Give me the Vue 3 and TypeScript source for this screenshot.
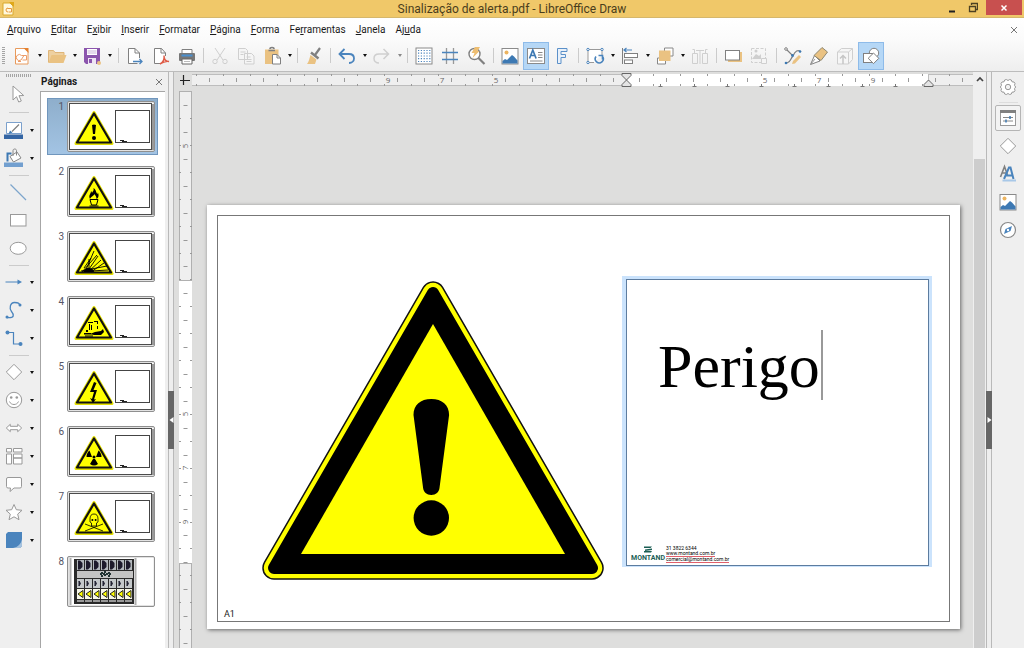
<script setup lang="ts">
interface Tool {
  kind: 'button' | 'sep'
  icon?: string
  label?: string
  menu?: boolean
  active?: boolean
  faded?: boolean
  wide?: boolean
}

const menus: [string, string, string][] = [
  ['', 'A', 'rquivo'],
  ['', 'E', 'ditar'],
  ['E', 'x', 'ibir'],
  ['', 'I', 'nserir'],
  ['', 'F', 'ormatar'],
  ['', 'P', 'ágina'],
  ['', 'F', 'orma'],
  ['Fe', 'r', 'ramentas'],
  ['', 'J', 'anela'],
  ['Aj', 'u', 'da'],
]

const b = (icon: string, label: string, extra: Partial<Tool> = {}): Tool => ({ kind: 'button', icon, label, ...extra })
const sep = (wide = false): Tool => ({ kind: 'sep', wide })

const toolbar: Tool[] = [
  b('new', 'Novo', { menu: true }),
  b('open', 'Abrir', { menu: true }),
  b('save', 'Salvar', { menu: true }),
  sep(true),
  b('export', 'Exportar'),
  b('pdf', 'Exportar como PDF'),
  b('print', 'Imprimir'),
  sep(),
  b('cut', 'Cortar'),
  b('copy', 'Copiar'),
  b('paste', 'Colar', { menu: true }),
  sep(),
  b('brush', 'Clonar formatação'),
  sep(),
  b('undo', 'Desfazer', { menu: true }),
  b('redo', 'Refazer', { menu: true, faded: true }),
  sep(),
  b('grid', 'Exibir grade'),
  b('guides', 'Linhas de ajuda'),
  b('zoom', 'Zoom'),
  sep(true),
  b('image', 'Inserir imagem'),
  b('textbox', 'Inserir caixa de texto', { active: true }),
  b('fontwork', 'Inserir Fontwork'),
  sep(),
  b('transform', 'Transformações', { menu: true }),
  b('align', 'Alinhar', { menu: true }),
  b('arrange', 'Dispor', { menu: true }),
  b('distribute', 'Distribuir'),
  sep(),
  b('shadow', 'Sombra'),
  b('crop', 'Cortar imagem'),
  sep(true),
  b('points', 'Editar pontos'),
  b('glue', 'Pontos de colagem'),
  b('extrude', 'Extrusão'),
  b('shapes', 'Mostrar funções de desenho', { active: true }),
]

const drawTools: Tool[] = [
  b('select', 'Selecionar'),
  sep(true),
  b('linecolor', 'Cor da linha', { menu: true }),
  b('fillcolor', 'Cor de preenchimento', { menu: true }),
  sep(),
  b('line', 'Linha'),
  b('rect', 'Retângulo'),
  b('ellipse', 'Elipse'),
  sep(),
  b('arrowline', 'Linhas e setas', { menu: true }),
  b('curve', 'Curvas', { menu: true }),
  b('connector', 'Conectores', { menu: true }),
  sep(),
  b('diamond', 'Formas simples', { menu: true }),
  b('smile', 'Símbolos', { menu: true }),
  b('dblarrow', 'Setas largas', { menu: true }),
  b('flow', 'Fluxograma', { menu: true }),
  b('callout', 'Balões', { menu: true }),
  b('star', 'Estrelas', { menu: true }),
  b('cube', 'Objetos 3D', { menu: true }),
]

const sideTools = [
  { icon: 'props', label: 'Propriedades', active: true },
  { icon: 'diamond', label: 'Formas' },
  { icon: 'styles', label: 'Estilos' },
  { icon: 'image', label: 'Galeria' },
  { icon: 'compass', label: 'Navegador' },
]

const G = '#808080'
const L = '#cfcfcf'
const B = '#4a84bd'
const O = '#eac282'

const icons: Record<string, string> = {
  new: `<path d="M3.500 2.500h9.500l3 3v12.500h-12.500z" fill="#fff" stroke="#e89a5c"/><path d="M11.500 2h5v5z" fill="#e5812f"/><path d="M9.500 9.500a3 3 0 1 0-.5 4.500l3-4.500M9.500 9.500h5v4.500h-4M6 15.500h3" fill="none" stroke="#ec9c68"/>`,
  open: `<path d="M1.500 16.500v-12h5l1.500 2h9v3" fill="#eed0a0" stroke="#dfb578"/><path d="M1.500 17l3-8h15l-3 8z" fill="${O}"/>`,
  save: `<path d="M2 2h16v16h-14l-2-2z" fill="#8b55ad"/><path d="M5 3h10v6h-10z" fill="#fff"/><path d="M5.500 5h9M5.500 7h9" stroke="#c9b4d8"/><path d="M6 12h8v6h-8z" fill="#eee5f3"/><path d="M7 13h3v4h-3z" fill="#8b55ad"/><circle cx="17" cy="17" r="2" fill="${O}"/>`,
  export: `<path d="M12.500 17.500h-9v-15h6.500l4.500 4.500v5" fill="#fff" stroke="${G}"/><path d="M10 2.500v4.500h4.500" fill="none" stroke="${G}"/><path d="M8 15.500h9M14.500 13l2.500 2.500-2.500 2.500" fill="none" stroke="${B}" stroke-width="1.300"/>`,
  pdf: `<path d="M9 17.500h-5.500v-15h7l4 4.500v3" fill="#fff" stroke="${G}"/><path d="M10 2.500v4.500h4.500" fill="none" stroke="${G}"/><path d="M9 18c3-1.500 4.500-5 4-8.500 0 4 2 6 5 6-3-.5-6 .5-9 2.500z" fill="none" stroke="#df5a45" stroke-width="1.400"/>`,
  print: `<path d="M5 7v-3.500h10v3.500" fill="#fff" stroke="${G}"/><rect x="2" y="7" width="16" height="8" rx="1" fill="#777"/><path d="M4.500 9.500h11" stroke="#4a90d0" stroke-width="2"/><path d="M5 13h10v5h-10z" fill="#fff" stroke="#666"/><path d="M7 15.500h6" stroke="#bbb"/>`,
  cut: `<path d="M5 2l8 12M15 2l-8 12" stroke="${L}" fill="none"/><circle cx="5" cy="15.500" r="2.200" fill="none" stroke="${L}"/><circle cx="15" cy="15.500" r="2.200" fill="none" stroke="${L}"/>`,
  copy: `<path d="M2.500 2.500h7l2 2v9h-9zM8.500 7.500h7l2.500 2.500v8h-9.500z" fill="#f5f5f5" stroke="${L}"/><path d="M4.500 6h5M4.500 8.500h3M10.500 11h4M10.500 13.500h5M10.500 15.500h5" stroke="${L}"/>`,
  paste: `<path d="M3 3.500h13.500v14.500h-13.500z" fill="${O}"/><path d="M6.500 4.500h6.500M8 3c0-2 4-2 4 0" fill="none" stroke="${G}" stroke-width="1.600"/><path d="M10.500 8.500h4.500l3.500 3.500v6h-8z" fill="#fff" stroke="${G}"/><path d="M15 8.500v3.500h3.500" fill="none" stroke="${G}"/>`,
  brush: `<path d="M16 2l-5 7" stroke="${G}" stroke-width="2.200"/><path d="M7 6.500l7.500 6" stroke="${G}" stroke-width="2.400"/><path d="M6.500 9l6 4.500-1.500 4.500h-8c2-2.500 2.500-6 3.500-9z" fill="${O}"/>`,
  undo: `<path d="M7.500 3l-5 5 5 5M3 8h9c3.500 0 5 2 5 4.500s-2 4.500-5 4.500" fill="none" stroke="${B}" stroke-width="1.800"/>`,
  redo: `<path d="M11.500 3l5 5-5 5M16 8h-9c-3.500 0-5 2-5 4.500s2 4.500 5 4.500" fill="none" stroke="${L}" stroke-width="1.500"/>`,
  grid: `<rect x="2" y="2" width="16" height="16" fill="#fff" stroke="#8a8a8a"/><path d="M4 4.500h13M4 7.200h13M4 10h13M4 12.700h13M4 15.500h13" stroke="${B}" stroke-width="1.200" stroke-dasharray="1.200 1.600"/>`,
  guides: `<path d="M6.500 2v16M13.500 2v16" stroke="#999" stroke-width="1.300"/><path d="M2 6.500h16M2 13.500h16" stroke="${B}" stroke-width="1.300"/>`,
  zoom: `<circle cx="8.500" cy="8" r="5.500" fill="#fff" stroke="${G}" stroke-width="1.400"/><path d="M12.500 12l6 6" stroke="${G}" stroke-width="2.200"/><path d="M9 1h5l-2.500 4h2l-7 7 2-5h-3z" fill="#eebe72"/>`,
  image: `<rect x="2" y="2.500" width="16" height="15.500" fill="#fff" stroke="#8a8a8a"/><circle cx="6.500" cy="6.500" r="2" fill="#ecb460"/><path d="M2.500 15l2.500-2 2 1 5-5 2 1.500 3.500 4v3h-15z" fill="#3d79b3"/>`,
  textbox: `<rect x="1.500" y="2.500" width="17" height="15" fill="#fff" stroke="#8a8a8a"/><path d="M3.500 12.500l3.300-8.500 3.300 8.500M5 9.500h3.600" fill="none" stroke="#3d79b3" stroke-width="1.700"/><path d="M12 6.500h4.500M12 9h4.500M12 11.500h4.500M4 15h12.500" stroke="#888"/>`,
  fontwork: `<path d="M5.500 2.500h9.500v3h-6v3h4.500v3h-4.500v6h-3.500v-12.500z" fill="#e9f1fa" stroke="#5b90c9"/>`,
  transform: `<path d="M17 9v-5.500h-14v13h6" fill="#fff" stroke="#999"/><path d="M17.500 10.500a4 4 0 1 1-6.500 0M13.500 9.500h4v4" fill="none" stroke="${B}" stroke-width="1.600"/><g fill="#fff" stroke="${B}"><circle cx="3" cy="3.500" r="1.200"/><circle cx="17" cy="3.500" r="1.200"/><circle cx="3" cy="16.500" r="1.200"/></g>`,
  align: `<path d="M2.500 2v16" stroke="${G}"/><path d="M4 4h8M6.500 2l-2.500 2 2.500 2" fill="none" stroke="${B}" stroke-width="1.200"/><rect x="4.500" y="7.500" width="13" height="4" fill="#fff" stroke="${G}"/><rect x="4.500" y="14" width="8" height="3.500" fill="#fff" stroke="${G}"/>`,
  arrange: `<path d="M9.500 5v-3h8.500v8h-3M5 12h-2.500v6h8v-3" fill="#fff" stroke="#888"/><rect x="4" y="4.500" width="11.500" height="10.500" fill="${O}"/>`,
  distribute: `<path d="M2.500 7.500h5v10h-5zM12.500 7.500h5v10h-5zM10 4v14M4.500 7v-3.500h-2M15.500 7v-3.500h2M6 4.500h8" fill="none" stroke="${L}"/>`,
  shadow: `<rect x="5" y="6" width="14" height="10" fill="${O}"/><rect x="2.500" y="4.500" width="14" height="9.500" fill="#fff" stroke="${G}"/>`,
  crop: `<rect x="2.500" y="2.500" width="14" height="14" fill="none" stroke="${L}" stroke-dasharray="3 1.500"/><path d="M3 13l4-5 3 2 2-2v5z" fill="${L}"/><circle cx="7" cy="5" r="1.500" fill="${L}"/><path d="M12.500 12.500h5v5h-5z" fill="#f5f5f5" stroke="${L}"/>`,
  points: `<path d="M3 3l7 7c2-5 5-7 8-4M10 10c-3 3-2 6-6 7" fill="none" stroke="${G}" stroke-width="1.200"/><path d="M16 9l-6 6-1 3 3-.5 6-6.500z" fill="${O}"/><g fill="#3d79b3"><circle cx="3" cy="17" r="1.300"/><circle cx="9.500" cy="9.500" r="1.400"/><circle cx="17" cy="5.500" r="1.300"/></g><circle cx="3" cy="3" r="1.300" fill="#fff" stroke="${G}"/>`,
  glue: `<path d="M1.500 18.500l4-9 5.500 5.500z" fill="#fff" stroke="${G}"/><path d="M5 9.500l8-8 5.500 4.500-6.500 8.500z" fill="${O}" stroke="#8e8872"/><path d="M2 18l4-5" stroke="#999"/>`,
  extrude: `<path d="M2.500 6h11v12h-11zM2.500 6l4-3.500h11l-4 3.500M17.500 2.500v11l-4 4.500" fill="#f6f6f6" stroke="${L}"/><path d="M8 18v-8M5 12.500l3-3 3 3" fill="none" stroke="#c6c6c6" stroke-width="1.500"/>`,
  shapes: `<circle cx="13" cy="7" r="4.700" fill="#fff" stroke="${G}"/><rect x="2.500" y="7.500" width="9" height="9" fill="#fff" stroke="${G}"/><path d="M12.500 7l5.300 5.300-5.300 5.300-5.300-5.300z" fill="#fff" stroke="${G}"/>`,
  select: `<path d="M5 2v14l3.500-3.300 2.200 5.300 2.600-1-2.300-5.300 4.700-.2z" fill="#fff" stroke="#999"/>`,
  linecolor: `<path d="M2.500 2.500h15v11h-15z" fill="#fff" stroke="#7ba0cc"/><path d="M15 4.500l-7 7" stroke="${G}" stroke-width="1.300"/><path d="M4.500 14l1.500-3.500 2.500 2z" fill="#3d79b3"/><rect x="0" y="14.500" width="19" height="4.500" fill="#3465a4"/>`,
  fillcolor: `<path d="M3.500 13.500v-8h4" fill="none" stroke="#3d79b3" stroke-width="2"/><path d="M6 8.500l7-4.500 4 6-7.500 4z" fill="#fff" stroke="#888"/><path d="M9 8v-5.500c0-2 3.500-2 3.500 0v5" fill="none" stroke="#888"/><rect x="0" y="14.500" width="19" height="4.500" fill="#729fcf"/>`,
  line: `<path d="M2.500 2.500l15.500 15.500" stroke="#7da5cc" stroke-width="1.200"/>`,
  rect: `<rect x="2.500" y="4.500" width="15.500" height="11.500" fill="#fff" stroke="#999"/>`,
  ellipse: `<ellipse cx="10.200" cy="10.300" rx="8" ry="6" fill="#fff" stroke="#999"/>`,
  arrowline: `<path d="M1.500 10h13" stroke="${B}"/><path d="M13.500 7.500l4.500 2.500-4.500 2.500z" fill="${B}"/>`,
  curve: `<path d="M3 17.500c8 1 7-3 4.500-6s-1.500-9 3-9 4.500 1 5.500 3" fill="none" stroke="${B}" stroke-width="1.300"/><circle cx="3" cy="17" r="1.500" fill="${B}"/><circle cx="16" cy="5" r="1.500" fill="${B}"/>`,
  connector: `<path d="M4 4.500h5.500v11.500h7" fill="none" stroke="${B}" stroke-width="1.200"/><circle cx="3.500" cy="4.500" r="2" fill="${B}"/><circle cx="16.500" cy="16" r="2" fill="${B}"/>`,
  diamond: `<path d="M10 2.300l7.700 7.700-7.700 7.700-7.700-7.700z" fill="#fff" stroke="#999"/>`,
  smile: `<circle cx="10" cy="10" r="7.700" fill="#fff" stroke="#999"/><path d="M5.500 11.500c1.500 4 7.500 4 9 0" fill="none" stroke="#999"/><circle cx="7.200" cy="7.500" r="1.300" fill="#999"/><circle cx="12.800" cy="7.500" r="1.300" fill="#999"/>`,
  dblarrow: `<path d="M2.300 10l4-3.700v2h7.400v-2l4 3.700-4 3.700v-2h-7.400v2z" fill="#fff" stroke="#999"/>`,
  flow: `<path d="M2.500 2.500h5v3.500h-5zM9.500 2.500h8.500v3.500h-8.500zM2.500 8h5v10h-5zM9.500 8h8.500v4h-8.500zM9.500 12h8.500v6h-8.500z" fill="#fff" stroke="#999"/>`,
  callout: `<path d="M4 3.500h12q1.500 0 1.500 1.500v7.500q0 1.500-1.500 1.500h-6l-4 3.500.5-3.500h-2.500q-1.500 0-1.500-1.500v-7.500q0-1.500 1.500-1.500z" fill="#fff" stroke="#999"/>`,
  star: `<path d="M10 2.500l2.300 5.200 5.700.6-4.300 3.800 1.300 5.600-5-2.900-5 2.900 1.300-5.600-4.300-3.800 5.700-.6z" fill="#fff" stroke="#999"/>`,
  cube: `<path d="M2 4l2-2h14v14l-2 2h-14z" fill="#4a84bd"/><path d="M9 18c5-1 8-4 9-9v7l-2 2z" fill="#a5c2de"/>`,
  gear: `<path d="M8.300 2.500l1.700 1 1.700-1 1.600.5.700 1.800 2 .2 1 1.500-.5 1.800 1.200 1.700-1.200 1.700.5 1.800-1 1.500-2 .2-.7 1.800-1.600.5-1.700-1-1.700 1-1.600-.5-.7-1.800-2-.2-1-1.500.5-1.800-1.200-1.700 1.200-1.700-.5-1.800 1-1.500 2-.2.7-1.800z" fill="#fff" stroke="#999"/><circle cx="10" cy="10" r="2.700" fill="#f2f2f2" stroke="#999"/>`,
  props: `<rect x="2.500" y="2.500" width="15" height="15" fill="#fff" stroke="#999"/><rect x="2" y="2" width="16" height="3" fill="${G}"/><path d="M5 9.500h10M5 13h10" stroke="#888"/><path d="M12 8v3M8 11.500v3" stroke="#3d79b3" stroke-width="1.500"/>`,
  styles: `<path d="M2.500 13l4-10.500 3 8.500M4 9h4" fill="none" stroke="#808080" stroke-width="1.600"/><path d="M6 15l5-11.500h1.500l3 11.500M8 11.500h6" fill="none" stroke="${B}" stroke-width="2"/><rect x="4.500" y="15.500" width="13.500" height="2" fill="#a8c8e8"/>`,
  compass: `<circle cx="10" cy="10" r="7.500" fill="#fff" stroke="#888" stroke-width="1.200"/><path d="M14 6l-1.500 5-6.500 3 1.500-5z" fill="${B}"/><circle cx="10" cy="10" r="1.200" fill="#fff"/>`,
}

const symbols: string[] = [
  `<path d="M25 24q2-1 4 0l-1 9h-2z"/><circle cx="27" cy="37" r="2"/>`,
  `<path d="M23 33c-2-4 1-5 1-8 1 1 1 2 1 2 1-2 2-2 1.500-5 3 2 2 4 4 6 .5-1 .5-2 0-2 2 3 1 6-1 7 0-3-1-3-2-5-1 2-3 2-4.500 5z"/><path d="M23 33.500h8l-1.500 5.500h-5zM22.500 40h9" fill="#ff0" stroke="#000"/>`,
  `<path d="M14 40L40 35M15 41L30 24M18 41L27 20M22 41L22 28M21 41L34 29M24 41L37 32M17 37L24 27M24 40L41 39M20 41L31 25" stroke="#000" stroke-width=".9"/><path d="M16 41q3-5 7-4t4 4z"/>`,
  `<path d="M17 37h7v1.500h-7zM18 39.500h8v1h-8zM28 36l6-1 2-2 1 3-3 3h-7l-4-1zM21 26h5v1h-5zM27 25h4v1h-4zM22 28h1v6h-1zM24 29h1v5h-1zM30 26h1v2h-1zM30 30h1v3h-1zM19 34h2v2h-2z"/>`,
  `<path d="M27 21l-4 10h4l-2 7-2-1 3 5 3-4-2 .5 3-9.500h-3.500l3-7z"/>`,
  `<circle cx="27" cy="31" r="1.500"/><path d="M25 31h-5.500q0-4 3-6.500zM29 31h5.500q0-4-3-6.500zM26 33l-3 5q4 3 8 0l-3-5z"/>`,
  `<path d="M18 33l18 7M36 33l-18 7M23 28q0-5 4-5t4 5v3l-1.500 1v3h-5v-3l-1.500-1z" fill="#ff0" stroke="#000" stroke-width=".8"/><circle cx="25.400" cy="29" r="1"/><circle cx="28.600" cy="29" r="1"/>`,
]

const seq = (start: number, n: number, step = 26.9): number[] => Array.from({ length: n }, (_, i) => Math.round(start + i * step))
const hMid = seq(17, 30)
const hEdge = seq(4, 30)
const tabs = seq(468, 8, 33.6)
const hNums: [number, number][] = [[196, 9], [250, 7], [304, 5], [573, 5], [627, 7], [681, 9]]
const vMid = seq(14, 21)
const vEdge = seq(27, 21)
const vNums: [number, number][] = [[55, 5], [323, 5], [377, 7], [431, 9]]
const cols = [0, 1, 2, 3, 4, 5, 6]
</script>

<template>
  <div class="app">
    <header class="title">
      <svg class="appicon" viewBox="0 0 12 14"><path d="M1 1h7l3 3v9h-10z" fill="#fff8dc" stroke="#d9a92c" /><path d="M7 0h5v5z" fill="#e0a81a" /><path d="M6 6a2 2 0 1 0 0 4M5.500 6.500h4v3.500h-3" fill="none" stroke="#e5973c" /></svg>
      <h1>Sinalização de alerta.pdf - LibreOffice Draw</h1>
      <div class="winbtns">
        <button aria-label="Minimizar"><svg width="11" height="12"><path d="M3 9.500h6" stroke="#222" stroke-width="2" /></svg></button>
        <button aria-label="Restaurar"><svg width="13" height="12"><path d="M6.500 3v-1.500h6v6h-1.500M4.500 4.500h6v5h-6z" fill="none" stroke="#4d4122" stroke-width="1.300" /></svg></button>
        <button class="close" aria-label="Fechar"><svg width="8" height="8"><path d="M1.500 1.500l5 5M6.500 1.500l-5 5" stroke="#fff" stroke-width="1.500" /></svg></button>
      </div>
    </header>

    <div class="chrome">
      <nav class="menubar">
        <button v-for="m in menus" :key="m.join('')">{{ m[0] }}<u>{{ m[1] }}</u>{{ m[2] }}</button>
        <button class="docclose" aria-label="Fechar documento"><svg width="8" height="8"><path d="M1 1l6 6M7 1l-6 6" stroke="#777" /></svg></button>
      </nav>
      <div class="toolbar" role="toolbar" aria-label="Padrão">
        <span class="grip"></span>
        <template v-for="(t, i) in toolbar" :key="i">
          <span v-if="t.kind === 'sep'" class="sep" :class="{ wide: t.wide }"></span>
          <template v-else>
            <button class="tool" :class="{ active: t.active }" :aria-label="t.label"><svg viewBox="0 0 20 20" v-html="icons[t.icon!]"></svg></button>
            <button v-if="t.menu" class="drop" :class="{ faded: t.faded }" :aria-label="t.label + ': opções'"></button>
          </template>
        </template>
      </div>
    </div>

    <div class="body">
      <div class="drawbar" role="toolbar" aria-label="Desenho">
        <span class="hgrip"></span>
        <template v-for="(t, i) in drawTools" :key="i">
          <span v-if="t.kind === 'sep'" class="hsep" :class="{ wide: t.wide }"></span>
          <div v-else class="drow">
            <button class="tool" :aria-label="t.label"><svg viewBox="0 0 20 20" v-html="icons[t.icon!]"></svg></button>
            <button v-if="t.menu" class="drop" :aria-label="t.label + ': opções'"></button>
          </div>
        </template>
      </div>

      <aside class="pages">
        <div class="phead">
          <h2>Páginas</h2>
          <button aria-label="Fechar painel"><svg width="8" height="8"><path d="M1 1l6 6M7 1l-6 6" stroke="#777" /></svg></button>
        </div>
        <ol class="plist">
          <li v-for="n in 8" :key="n" :class="{ current: n === 1 }">
            <span class="num">{{ n }}</span>
            <svg class="thumb" viewBox="0 0 88 51">
              <rect x=".5" y=".5" width="87" height="50" rx="1.500" fill="#e2e2e2" stroke="#8f8f8f" />
              <rect x="2" y="2" width="84.500" height="47" fill="#fff" />
              <template v-if="n < 8">
                <path d="M86 3v46" stroke="#9a9a9a" stroke-width="2" />
                <rect x="2.500" y="2.500" width="82" height="46" fill="#fff" stroke="#4c4c4c" />
                <path d="M27 11.500l18 31h-36z" fill="#ff0" stroke="#e4e000" stroke-width="3" stroke-linejoin="round" />
                <path d="M27 12.500l17 29h-34z" fill="#ff0" stroke="#111" stroke-width="2.200" stroke-linejoin="round" />
                <g v-html="symbols[n - 1]"></g>
                <rect x="48.500" y="9.500" width="34" height="32" fill="#fff" stroke="#444" />
                <path d="M53 39.500h4M55 40.500h5" stroke="#222" />
              </template>
              <template v-else>
                <path d="M3.500 2v47M68.500 2v47" stroke="#b0b0b0" stroke-width="2" />
                <rect x="7" y="3" width="60" height="45" fill="#2a2a2a" />
                <rect x="10" y="15" width="56" height="7" fill="#c4c4c4" />
                <path d="M33 18h11M35 16v5M38 15v6M42 16v5" stroke="#233" stroke-width="2" stroke-dasharray="2 1" />
                <g v-for="c in cols" :key="c">
                  <rect :x="10 + c * 8" y="4" width="7" height="10" fill="#b4b9bd" />
                  <path :d="`M${11 + c * 8} 4.500h2l2.500 2.500v4l-2.500 2.500h-2z`" fill="#1d1a2b" />
                  <rect :x="10 + c * 8" y="23" width="7" height="9" fill="#c4c8ca" />
                  <path :d="`M${12 + c * 8} 25v5l1.500-2.500z`" fill="#223" stroke="#223" />
                  <rect :x="10 + c * 8" y="33" width="7" height="10" fill="#f7f7e8" />
                  <path :d="`M${11 + c * 8} 38l5-3.500v7z`" fill="#ff0" stroke="#222" />
                  <rect :x="10 + c * 8" y="44" width="7" height="2" fill="#999" />
                </g>
              </template>
            </svg>
          </li>
        </ol>
      </aside>

      <div class="split"><button aria-label="Recolher painel"><svg width="5" height="8"><path d="M4.500 1v6l-4-3z" fill="#fff" /></svg></button></div>

      <main class="work">
        <div class="corner"><svg width="16" height="18"><path d="M6 8.500h10M9.500 3v10" stroke="#222" stroke-width="1.200" /></svg></div>
        <div class="hruler">
          <svg width="100%" height="16">
            <rect x="0" y="2.500" width="100%" height="11" fill="#efefef" />
            <rect x="434" y="2" width="302" height="12" fill="#fff" />
            <path d="M0 2.500h434M0 13.500h434M736.500 2v12M737 2.500h900M737 13.500h900" stroke="#bdbdbd" />
            <path v-for="x in hMid" :key="'m' + x" :d="`M${x + .5} 6v4`" stroke="#999" />
            <path v-for="x in hEdge" :key="'e' + x" :d="`M${x + .5} 2v2M${x + .5} 12v2`" stroke="#999" />
            <path v-for="x in tabs" :key="'t' + x" :d="`M${x - 1.500} 14.500h4M${x + .5} 12v3`" stroke="#777" />
            <text v-for="n in hNums" :key="n[0]" :x="n[0]" y="11" text-anchor="middle">{{ n[1] }}</text>
            <path d="M430 1.500h9v2l-4.500 4.500-4.500-4.500zM434.500 8l4.500 4.500v2h-9v-2z" fill="#e4e4e4" stroke="#666" />
            <path d="M736.500 8l4.500 4.500v2h-9v-2z" fill="#e4e4e4" stroke="#666" />
          </svg>
        </div>
        <div class="vruler">
          <svg width="13" height="100%">
            <rect width="13" height="100%" fill="#efefef" />
            <rect y="190" width="13" height="282" fill="#fff" />
            <path d="M.5 0v190M12.500 0v190M0 .5h13M0 189.500h13M0 472.500h13M.5 472v900M12.500 472v900" stroke="#b0b0b0" />
            <path v-for="y in vMid" :key="'m' + y" :d="`M4.500 ${y + .5}h4`" stroke="#999" />
            <path v-for="y in vEdge" :key="'e' + y" :d="`M0 ${y + .5}h2M11 ${y + .5}h2`" stroke="#999" />
            <text v-for="n in vNums" :key="n[0]" :transform="`translate(9 ${n[0]}) rotate(-90)`" text-anchor="middle">{{ n[1] }}</text>
          </svg>
        </div>
        <div class="canvas">
          <article class="sheet">
            <div class="frame">
              <div class="objects">
                <svg class="sign" viewBox="0 0 342 299" role="img" aria-label="Sinal de alerta">
                  <g stroke-linejoin="round">
                    <path d="M171 12l159 275h-318z" fill="#000" stroke="#111" stroke-width="23.500" />
                    <path d="M171 12l159 275h-318z" fill="#ff0" stroke="#ff0" stroke-width="20.500" />
                    <path d="M171 12l159 275h-318z" fill="#000" stroke="#000" stroke-width="12" />
                  </g>
                  <path d="M171 43l132 230h-264z" fill="#ff0" />
                  <path d="M151.500 134c0-10 7-16 17.800-16s17.800 6 17.800 16l-9.600 73c-.5 4-3.500 7-8.200 7s-7.700-3-8.200-7z" />
                  <circle cx="169.300" cy="237" r="17.700" />
                </svg>
                <div class="textframe">
                  <div class="textinner">
                    <p class="headline">Perigo<span class="caret"></span></p>
                    <footer class="contact">
                      <div class="brand">
                        <svg width="8" height="7"><path d="M0 .500h8l-1.500 1.500h-6.500zM1 3.500l7-1v1.500l-7 1zM0 5h8l-1 1.500h-7z" fill="#1c5f55" /></svg>
                        <strong>MONTAND</strong>
                      </div>
                      <div class="lines">
                        <span>31 3822 6344</span>
                        <span class="wavy">www.montand.com.br</span>
                        <span class="wavy">comercial@montand.com.br</span>
                      </div>
                    </footer>
                  </div>
                </div>
              </div>
              <span class="ref">A1</span>
            </div>
          </article>
        </div>
      </main>

      <div class="vscroll">
        <button aria-label="Rolar para cima"><svg width="8" height="6"><path d="M1 5l3-3 3 3" fill="none" stroke="#444" stroke-width="1.700" /></svg></button>
        <div class="knob"></div>
      </div>
      <div class="split"><button aria-label="Recolher barra lateral"><svg width="5" height="8"><path d="M.5 1v6l4-3z" fill="#fff" /></svg></button></div>
      <aside class="side">
        <button class="stool gear" aria-label="Configurações"><svg viewBox="0 0 20 20" v-html="icons.gear"></svg></button>
        <span class="sideline"></span>
        <button v-for="s in sideTools" :key="s.icon" class="stool" :class="{ active: s.active }" :aria-label="s.label"><svg viewBox="0 0 20 20" v-html="icons[s.icon]"></svg></button>
      </aside>
    </div>
  </div>
</template>

<style>
html, body { margin: 0; overflow: hidden; }
</style>

<style scoped>
* { box-sizing: border-box; }
.app { height: 100vh; display: flex; flex-direction: column; overflow: hidden; background: #efefef; color: #1a1a1a; font: 10px/14px Roboto, "Noto Sans", sans-serif; }
button { padding: 0; border: 0; background: none; font: inherit; color: inherit; }
svg { display: block; flex: none; }
h1, h2, p, ol { margin: 0; padding: 0; font: inherit; }

.title { height: 18px; flex: none; display: grid; grid-template-columns: 1fr auto 1fr; background: #f0c869; border-bottom: 1px solid #d5b76c; }
.appicon { width: 12px; height: 14px; margin: 2px 0 0 2px; }
.title h1 { font-size: 12px; line-height: 18px; color: #4a3d1c; }
.winbtns { display: flex; justify-content: flex-end; gap: 8px; padding-right: 2px; }
.winbtns button { height: 15px; }
.winbtns .close { width: 36px; background: #c8504f; display: grid; place-items: center; }

.chrome { flex: none; background: linear-gradient(#fff, #fbfbfb 40%, #eee); border-bottom: 1px solid #bcbcbc; }
.menubar { height: 22px; display: flex; align-items: center; gap: 10px; padding: 2px 6px 0 7px; }
.menubar u { text-underline-offset: 1px; }
.docclose { margin-left: auto; }
.toolbar { height: 31px; display: flex; align-items: center; }
.grip { width: 3px; height: 18px; margin: 0 4px 0 2px; background: repeating-linear-gradient(#a5a5a5 0 1px, transparent 1px 2px); }
.tool { width: 26px; height: 28px; flex: none; display: grid; place-items: center; }
.tool svg, .stool svg { width: 20px; height: 20px; }
.tool.active { background: #b5d7f6; box-shadow: inset 0 0 0 1px #8ebbe9; }
.drop { width: 9px; height: 28px; flex: none; display: grid; place-items: center; }
.drop::after { content: ""; border: 2px solid transparent; border-top: 3px solid #111; border-bottom: 0; }
.drop.faded::after { border-top-color: #888; }
.sep { width: 7px; height: 15px; flex: none; background: linear-gradient(#cbcbcb, #cbcbcb) center / 1px 100% no-repeat; }
.sep.wide { width: 8px; }

.body { flex: 1; min-height: 0; display: flex; }
.drawbar { width: 40px; flex: none; display: flex; flex-direction: column; }
.hgrip { width: 25px; height: 3px; margin: 2px 0 3px 6px; background: repeating-linear-gradient(90deg, #a5a5a5 0 1px, transparent 1px 2px); }
.drow { height: 28px; flex: none; display: flex; width: 36px; align-items: center; }
.drow .tool { flex: 1; }
.hsep { height: 6px; flex: none; width: 20px; margin-left: 9px; background: linear-gradient(#cbcbcb, #cbcbcb) center / 100% 1px no-repeat; }
.hsep.wide { height: 8px; }

.pages { width: 128px; flex: none; display: flex; flex-direction: column; }
.phead { height: 19px; flex: none; display: flex; align-items: center; justify-content: space-between; padding: 0 5px 0 1px; }
.phead h2 { font-weight: 700; }
.plist { flex: 1; min-height: 0; list-style: none; margin-right: 3px; background: #fff; border: solid #a6a6a6; border-width: 1px 0 0 1px; padding: 6px; display: flex; flex-direction: column; gap: 8px; }
.plist li { height: 57px; width: 111px; flex: none; display: flex; gap: 3px; padding-top: 3px; }
.plist .current { background: linear-gradient(#8eaecb, #a3c4e4); box-shadow: inset 0 0 0 1px #7096bd; }
.num { width: 17px; text-align: right; line-height: 12px; color: #556; }
.thumb { width: 88px; height: 51px; }

.split { width: 6px; flex: none; display: flex; align-items: center; border: solid #b9b9b9; border-width: 0 1px; background: #eee; }
.split button { width: 6px; height: 58px; margin: 120px -1px 0; flex: none; background: #666; display: grid; place-items: center; }
.work { flex: 1; min-width: 0; display: grid; grid-template: 18px 1fr / 18px 1fr; background: #dededd; }
.hruler { overflow: hidden; }
.vruler { margin: 1px 0 0 5px; min-height: 0; overflow: hidden; }
.hruler text, .vruler text { font: 8px "Open Sans", sans-serif; fill: #666; }
.canvas { min-height: 0; overflow: hidden; padding: 115px 13px 0 15px; }
.sheet { background: #fff; padding: 10px 10px 7px; box-shadow: 1px 1px 4px #666; }
.frame { border: 1px solid #777; padding: 60px 17px 0 44px; height: 407px; display: flex; flex-direction: column; justify-content: space-between; }
.objects { display: flex; justify-content: space-between; }
.sign { width: 342px; height: 299px; margin-top: 5px; }
.textframe { width: 310px; height: 291px; background: #cbe3fc; padding: 3px 3px 1px 4px; }
.textinner { height: 100%; background: #fff; border: 1px solid #5d7c9f; display: flex; flex-direction: column; justify-content: space-between; }
.headline { display: flex; align-items: flex-start; padding: 50px 0 0 31px; font: 62px/72px "Liberation Serif", serif; color: #000; }
.caret { width: 2px; height: 70px; margin-left: 1px; background: #999; }
.contact { display: flex; align-items: flex-end; gap: 1px; padding: 0 0 2px 4px; color: #111; }
.brand { display: flex; flex-direction: column; align-items: center; }
.brand strong { font: bold 7px/10px Roboto, "Liberation Sans", sans-serif; color: #1c5f55; }
.lines { display: flex; flex-direction: column; align-items: flex-start; font: 5px/5px Roboto, "Liberation Sans", sans-serif; color: #000; }
.wavy { border-bottom: 1px solid #e0606c; }
.ref { margin-left: -38px; font-size: 9px; line-height: 14px; }

.vscroll { width: 13px; flex: none; display: flex; flex-direction: column; padding: 0 1px; background: #efefef; }
.vscroll button { height: 14px; margin-bottom: 73px; flex: none; display: grid; place-items: center; }
.knob { flex: 1; background: #cdcdcd; }
.side { width: 32px; flex: none; display: flex; flex-direction: column; align-items: center; gap: 2px; }
.stool { width: 26px; height: 26px; flex: none; display: grid; place-items: center; border: 1px solid transparent; border-radius: 2px; }
.stool.gear { margin-top: 2px; }
.stool.active { border-color: #b5b5b5; background: #f3f3f3; }
.sideline { width: 19px; height: 1px; background: #ddd; }
</style>
